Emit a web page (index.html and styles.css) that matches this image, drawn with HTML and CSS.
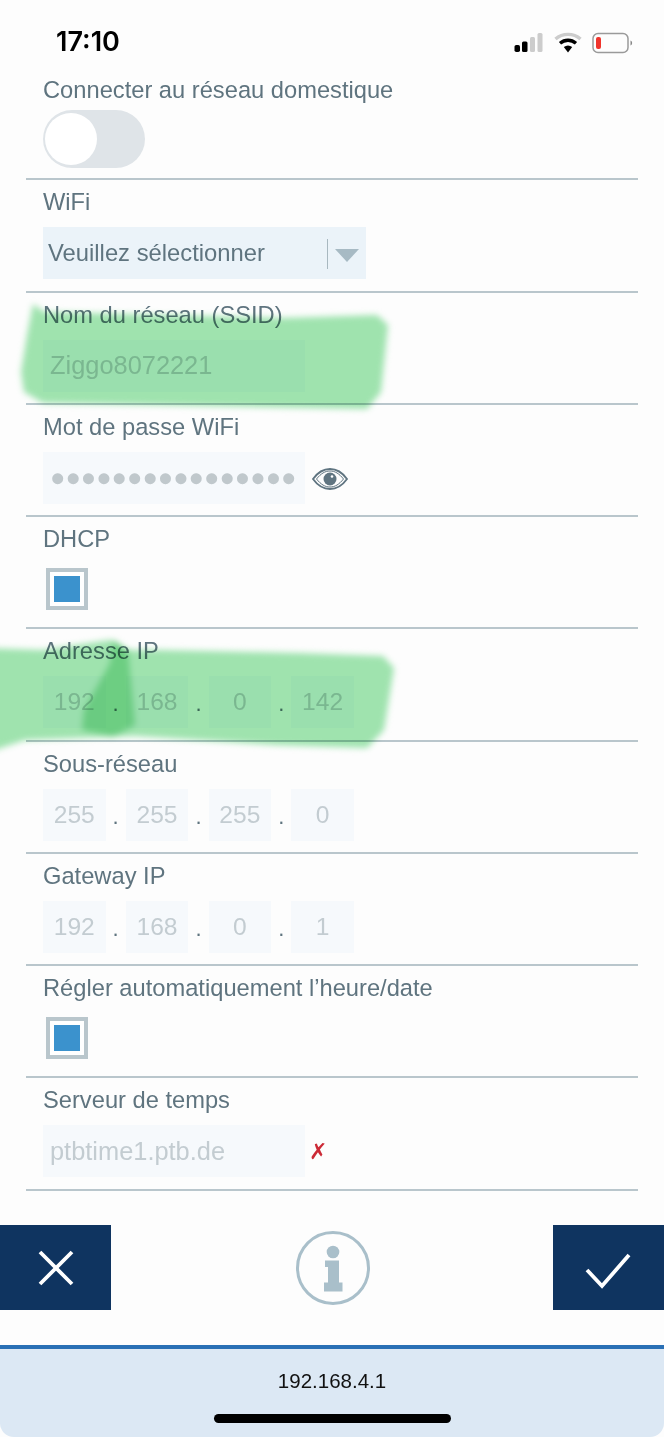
FILE: index.html
```html
<!DOCTYPE html>
<html lang="fr">
<head>
<meta charset="utf-8">
<title>Réseau</title>
<link rel="stylesheet" href="styles.css">
</head>
<body>
<div class="page">
  <header class="status">
    <span class="time">17:10</span>
    <div class="status-icons">
      <svg class="signal" width="30" height="19" viewBox="0 0 30 19"><rect x="0.500" y="12" width="5.500" height="7" rx="1.800" fill="#000"/><rect x="8" y="8.500" width="5.500" height="10.500" rx="1.500" fill="#000"/><rect x="16" y="4" width="5" height="15" rx="1.500" fill="#ccc"/><rect x="23.500" y="0" width="5" height="19" rx="1.500" fill="#ccc"/></svg>
      <svg class="wifi" width="28" height="21" viewBox="0 0 28 21"><path d="M1.500 7C8.500 .8 19.500 .8 26.500 7" fill="none" stroke="#ccc" stroke-width="3.400"/><path d="M6 11.200C10.800 7.200 17.200 7.200 22 11.200" fill="none" stroke="#000" stroke-width="3.400"/><path d="M9.800 15C12.500 13 15.500 13 18.200 15L14 20.500Z" fill="#000"/></svg>
      <svg class="battery" width="41" height="22" viewBox="0 0 41 22"><rect x="1" y="1.500" width="35" height="19" rx="5" fill="none" stroke="#9a9a9a" stroke-width="1.500"/><rect x="4" y="5" width="5" height="12" rx="2" fill="#f0342c"/><path d="M38.500 8.500v5c1.200-.5 1.600-1.200 1.600-2.500s-.4-2-1.600-2.500z" fill="#888"/></svg>
    </div>
  </header>

  <main class="form">
    <section class="row">
      <div class="label">Connecter au réseau domestique</div>
      <div class="toggle"><span class="knob"></span></div>
    </section>
    <section class="row">
      <div class="label">WiFi</div>
      <div class="field select">
        <span class="select-text">Veuillez sélectionner</span>
        <span class="select-sep"></span>
        <span class="select-arrow"></span>
      </div>
    </section>
    <section class="row">
      <div class="label">Nom du réseau (SSID)</div>
      <div class="field input">Ziggo8072221</div>
    </section>
    <section class="row">
      <div class="label">Mot de passe WiFi</div>
      <div class="with-icon">
        <div class="field input password">●●●●●●●●●●●●●●●●</div>
        <svg class="eye" width="36" height="24" viewBox="0 0 36 24"><path d="M1 12C6 5 12 2 18 2s12 3 17 10c-5 7-11 10-17 10S6 19 1 12Z" fill="none" stroke="#5f7480" stroke-width="1.800"/><path d="M4.500 12C9 6.500 13 4 18 4s9 2.500 13.500 8C27 17.500 23 20 18 20S9 17.500 4.500 12Z" fill="none" stroke="#5f7480" stroke-width="1"/><circle cx="18" cy="12" r="6.500" fill="#5f7480"/><circle cx="20" cy="9.500" r="1.300" fill="#fff"/></svg>
      </div>
    </section>
    <section class="row">
      <div class="label">DHCP</div>
      <div class="check"><span class="check-fill"></span></div>
    </section>
    <section class="row">
      <div class="label">Adresse IP</div>
      <div class="ip"><span class="octet">192</span><span class="dot">.</span><span class="octet">168</span><span class="dot">.</span><span class="octet">0</span><span class="dot">.</span><span class="octet">142</span></div>
    </section>
    <section class="row">
      <div class="label">Sous-réseau</div>
      <div class="ip"><span class="octet">255</span><span class="dot">.</span><span class="octet">255</span><span class="dot">.</span><span class="octet">255</span><span class="dot">.</span><span class="octet">0</span></div>
    </section>
    <section class="row">
      <div class="label">Gateway IP</div>
      <div class="ip"><span class="octet">192</span><span class="dot">.</span><span class="octet">168</span><span class="dot">.</span><span class="octet">0</span><span class="dot">.</span><span class="octet">1</span></div>
    </section>
    <section class="row">
      <div class="label">Régler automatiquement l’heure/date</div>
      <div class="check"><span class="check-fill"></span></div>
    </section>
    <section class="row">
      <div class="label">Serveur de temps</div>
      <div class="with-icon">
        <div class="field input">ptbtime1.ptb.de</div>
        <span class="cross">✗</span>
      </div>
    </section>
  </main>

  <div class="actions">
    <button class="action">
      <svg class="x-icon" width="38" height="38" viewBox="0 0 38 38"><path d="M3 3 35 35M35 3 3 35" stroke="#fff" stroke-width="3.800" fill="none"/></svg>
    </button>
    <svg class="info" width="76" height="76" viewBox="0 0 76 76"><circle cx="38" cy="38" r="35.500" fill="none" stroke="#a9bfca" stroke-width="3"/><circle cx="38" cy="22" r="6.300" fill="#a9bfca"/><path d="M30 30.500H44V52.500H47.500V61.500H29V52.500H33V37H30Z" fill="#a9bfca"/></svg>
    <button class="action">
      <svg class="check-icon" width="46" height="38" viewBox="0 0 46 38"><path d="M2 17 17 33 44 2" stroke="#fff" stroke-width="3.800" fill="none"/></svg>
    </button>
  </div>

  <footer class="browser">
    <span class="url">192.168.4.1</span>
    <span class="home"></span>
  </footer>

  <svg class="marker" width="664" height="1437" viewBox="0 0 664 1437">
    <path d="M33 304 44 312 283 318 377 315 388 325 381 392 367 409 43 403 24 392 21 372 27 335Z" fill="#a0e5b0"/>
    <path d="M-20 648 43 650 110 640 128 650 160 650 300 653 383 656 394 668 384 730 367 748 277 745 135 736 25 740 -20 755Z" fill="#a0e5b0"/>
    <path d="M110 663 113 640 128 650 135 725 113 737 82 730 84 710Z" fill="#6ed083"/>
  </svg>
</div>
</body>
</html>
```
FILE: styles.css
```css
* { box-sizing: border-box; }
html, body { margin: 0; padding: 0; background: #fdfdfd; }
body { font-family: "Liberation Sans", Arial, sans-serif; }
.page { position: relative; width: 664px; height: 1437px; overflow: hidden; display: flex; flex-direction: column; }

.status { height: 68px; flex: none; display: flex; justify-content: space-between; padding: 27px 31px 0 56px; }
.time { font-family: Inter, "Liberation Sans", sans-serif; font-weight: 600; font-size: 27px; line-height: 30px; color: #000; }
.status-icons { display: flex; gap: 10px; align-items: flex-start; padding-top: 5px; }
.signal { margin-top: 1px; }
.wifi { margin-top: 0; }
.battery { margin-top: 0; }

.form { margin: 0 26px; flex: none; }
.row { height: 112.25px; border-bottom: 2px solid #b9c6cc; padding: 9px 0 0 17px; }
.label { font-size: 23.700px; line-height: 26px; height: 26px; color: #5f747f; white-space: nowrap; }
.field { height: 52px; margin-top: 12px; background: #f6f9fc; font-size: 23.800px; display: flex; align-items: center; }
.input { width: 262px; padding-left: 7px; color: #c3ccd1; font-size: 25.400px; }
.password { font-size: 25.500px; padding-left: 7px; color: #c0c8cc; white-space: nowrap; overflow: hidden; }

.toggle { width: 102px; height: 58px; margin-top: 7px; border-radius: 29px; background: #dfe4e8; padding: 3px 2px; }
.knob { display: block; width: 52px; height: 52px; border-radius: 50%; background: #fff; }

.select { width: 323px; background: #ebf3f9; padding-left: 5px; color: #5f747f; }
.select-text { flex: 1; }
.select-sep { width: 1px; height: 30px; background: #a8b8c0; margin-right: 7px; margin-top: 2px; }
.select-arrow { width: 0; height: 0; border-left: 12px solid transparent; border-right: 12px solid transparent; border-top: 13px solid #a7bac4; margin-right: 7px; margin-top: 5px; }

.with-icon { display: flex; align-items: center; gap: 7px; }
.eye { margin-top: 14px; }
.cross { font-family: "DejaVu Sans", sans-serif; font-size: 22px; line-height: 26px; color: #cc2a36; margin: 14px 0 0 -3px; font-weight: 700; width: 20px; }

.check { width: 42px; height: 42px; margin: 16px 0 0 3px; border: 4px solid #b9c6cc; background: #fff; padding: 4px; }
.check-fill { display: block; width: 26px; height: 26px; background: #3b92cd; }

.ip { display: flex; margin-top: 12px; height: 52px; }
.octet { width: 62.500px; height: 52px; background: #f6f9fc; color: #c3ccd1; font-size: 24.600px; display: flex; align-items: center; justify-content: center; }
.dot { width: 20.300px; display: flex; align-items: center; justify-content: center; font-size: 22px; color: #5f747f; padding-top: 4px; }

.actions { flex: none; margin-top: 34.500px; height: 85px; display: flex; justify-content: space-between; align-items: center; }
.action { width: 111px; height: 85px; border: 0; padding: 0; background: #0f3460; display: flex; align-items: center; justify-content: center; }
.check-icon { margin-top: 8px; margin-left: -2px; }
.info { display: block; margin-left: 1px; }

.browser { position: absolute; left: 0; right: 0; top: 1345px; bottom: 0; background: #dce8f4; border-top: 4px solid #2a70b5; display: flex; justify-content: center; border-radius: 0 0 14px 14px; }
.url { font-size: 20.500px; line-height: 24px; margin-top: 20px; color: #111; }
.home { position: absolute; left: 214px; top: 65px; width: 237px; height: 9px; border-radius: 5px; background: #000; }

.marker { position: absolute; left: 0; top: 0; pointer-events: none; overflow: visible; mix-blend-mode: multiply; filter: blur(3px); }
```
